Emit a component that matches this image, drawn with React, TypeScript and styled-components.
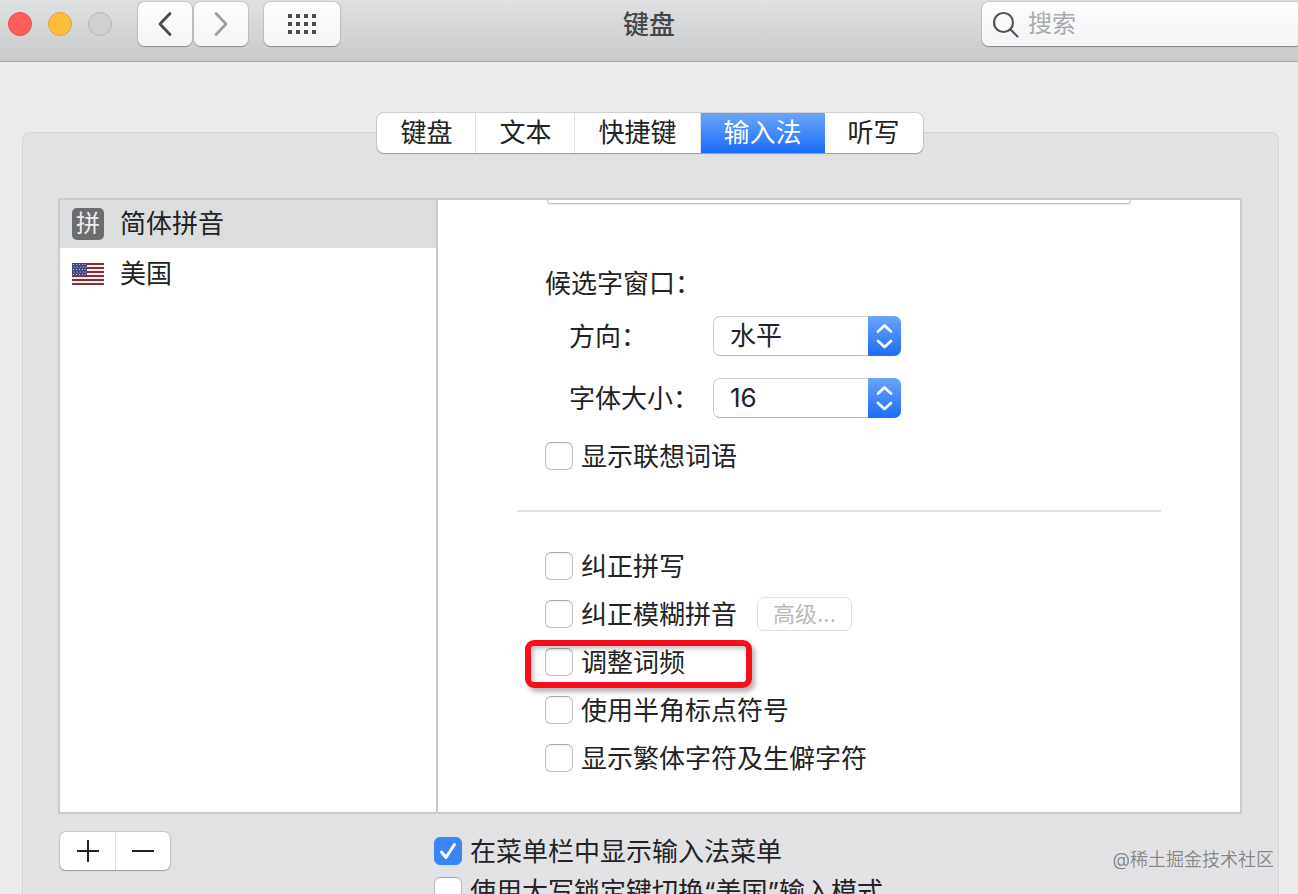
import React from "react";
import styled, { createGlobalStyle, css } from "styled-components";

const GlobalStyle = createGlobalStyle`
  *, *::before, *::after { box-sizing: border-box; }
  body { margin: 0; }
  body, button, input, select {
    font-family: Inter, "Noto Sans CJK SC", sans-serif;
    font-size: 26px;
    line-height: 40px;
    color: #222324;
  }
  button { padding: 0; border: 0; background: none; }
`;

const Window = styled.div`
  position: relative;
  display: flex;
  flex-direction: column;
  height: 100vh;
  overflow: hidden;
  background: #ebecee;
`;

const Toolbar = styled.header`
  display: grid;
  grid-template-columns: 1fr auto 1fr;
  align-items: start;
  flex: none;
  height: 62px;
  padding-top: 2px;
  background: linear-gradient(#dfe0e1, #c9cacc);
  border-bottom: 1px solid #a6a6a8;
`;

const ToolbarGroup = styled.div`
  display: flex;
  align-items: center;
  height: 44px;
  padding-left: 8px;
`;

const Lights = styled.div`
  display: flex;
  gap: 16px;
  margin-right: 26px;
`;

const Light = styled.button<{ $fill: string; $edge: string }>`
  width: 24px;
  height: 24px;
  border-radius: 50%;
  border: 1px solid ${(p) => p.$edge};
  background: ${(p) => p.$fill};
`;

const ToolButton = styled.button<{ $wide?: boolean }>`
  display: grid;
  place-items: center;
  width: ${(p) => (p.$wide ? 76 : 54)}px;
  height: 44px;
  margin-right: ${(p) => (p.$wide ? 0 : 2)}px;
  margin-left: ${(p) => (p.$wide ? 14 : 0)}px;
  border-radius: 7px;
  background: linear-gradient(#fdfdfe, #f4f5f7);
  box-shadow: 0 0 1px 1px rgba(0, 0, 0, 0.1), 0 1px 1px rgba(0, 0, 0, 0.25);
`;

const Title = styled.h1`
  margin: 0;
  font-size: 26px;
  line-height: 46px;
  font-weight: 500;
  color: #454648;
`;

const Search = styled.label`
  display: flex;
  align-items: center;
  justify-self: end;
  width: 320px;
  height: 44px;
  margin-right: -4px;
  padding-left: 10px;
  gap: 9px;
  border-radius: 7px;
  background: linear-gradient(#fdfdfe, #f3f4f6);
  box-shadow: 0 0 1px 1px rgba(0, 0, 0, 0.1), 0 1px 1px rgba(0, 0, 0, 0.3);
`;

const SearchInput = styled.input`
  flex: 1;
  min-width: 0;
  height: 40px;
  padding: 0;
  border: 0;
  outline: 0;
  background: none;
  font-size: 24px;
  &::placeholder { color: #a9aaac; opacity: 1; }
`;

const Panel = styled.main`
  display: flex;
  flex-direction: column;
  flex: 1;
  margin: 70px 19px 0 22px;
  padding: 0 36px 0 35px;
  background: #e2e2e4;
  border: 1px solid #d5d5d7;
  border-bottom: 0;
  border-radius: 8px 8px 0 0;
`;

const Tabs = styled.nav`
  display: flex;
  align-self: center;
  flex: none;
  height: 40px;
  margin: -20px 0 45px;
  border-radius: 7px;
  background: #fff;
  box-shadow: 0 0 1px 1px rgba(0, 0, 0, 0.13), 0 1px 1px rgba(0, 0, 0, 0.22);
`;

const Tab = styled.button<{ $active: boolean }>`
  padding: 0 23px;
  border-right: 1px solid #dedede;
  &:last-child { border-right: 0; }
  ${(p) =>
    p.$active &&
    css`
      color: #fff;
      border-right: 0;
      background: linear-gradient(#6aa5f8, #1a6dfb);
    `}
`;

const Split = styled.section`
  display: grid;
  grid-template-columns: 378px 1fr;
  flex: none;
  min-height: 616px;
  border: 2px solid #cbcbcc;
  background: #fff;
`;

const SourceList = styled.ul`
  display: flex;
  flex-direction: column;
  gap: 2px;
  margin: 0;
  padding: 0;
  list-style: none;
  border-right: 2px solid #cbcbcc;
`;

const Source = styled.li<{ $selected?: boolean }>`
  display: flex;
  align-items: center;
  gap: 16px;
  height: 48px;
  padding-left: 12px;
  background: ${(p) => (p.$selected ? "#dcddde" : "transparent")};
`;

const PinyinBadge = styled.span`
  width: 32px;
  height: 32px;
  border-radius: 5px;
  background: #6c6d6e;
  color: #ececec;
  font-size: 24px;
  line-height: 32px;
  text-align: center;
`;

const Options = styled.div`
  display: flex;
  flex-direction: column;
  padding: 0 79px;
`;

const ClippedField = styled.div`
  flex: none;
  height: 4px;
  margin: 0 30px 60px;
  border: 1px solid #c4c6c8;
  border-top: 0;
  border-radius: 0 0 6px 6px;
  box-shadow: 0 1px 2px rgba(0, 0, 0, 0.12);
`;

const Group = styled.div`
  display: flex;
  flex-direction: column;
  padding-left: 28px;
`;

const GroupTitle = styled.div`
  margin-bottom: 11px;
`;

const Fields = styled.div`
  display: flex;
  flex-direction: column;
  gap: 22px;
  margin: 0 0 19px 24px;
`;

const Field = styled.div`
  display: grid;
  grid-template-columns: 144px 188px;
  align-items: center;
  height: 40px;
`;

const FieldLabel = styled.label`
  padding-top: 2px;
`;

const SelectBox = styled.div`
  position: relative;
  height: 40px;
`;

const Select = styled.select`
  appearance: none;
  width: 100%;
  height: 40px;
  padding: 0 40px 0 16px;
  border: 1px solid #cfcfd0;
  border-bottom-color: #b9b9ba;
  border-radius: 7px;
  background: #fff;
  line-height: 38px;
`;

const Stepper = styled.span`
  position: absolute;
  inset: 0 0 0 auto;
  display: grid;
  place-items: center;
  width: 33px;
  border-radius: 0 7px 7px 0;
  background: linear-gradient(#6aa5f8, #1a6dfb);
  pointer-events: none;
`;

const CheckRow = styled.div<{ $compact?: boolean }>`
  position: relative;
  display: flex;
  align-items: center;
  gap: 20px;
  height: ${(p) => (p.$compact ? 40 : 48)}px;
`;

const CheckLabel = styled.label`
  display: flex;
  align-items: center;
  gap: 8px;
  height: 40px;
  white-space: nowrap;
`;

const CheckText = styled.span`
  padding-top: 2px;
`;

const CheckBox = styled.span`
  position: relative;
  display: grid;
  width: 28px;
  height: 28px;
`;

const CheckInput = styled.input`
  appearance: none;
  width: 28px;
  height: 28px;
  margin: 0;
  border: 1px solid #bdbebf;
  border-top-color: #a9aaab;
  border-radius: 6px;
  background: #fff;
  box-shadow: inset 0 1px 2px rgba(0, 0, 0, 0.08);
  &:checked {
    border-color: #3b86f7;
    background: #3b86f7;
    box-shadow: none;
  }
  & + svg { display: none; }
  &:checked + svg {
    display: block;
    position: absolute;
    inset: 0;
    pointer-events: none;
  }
`;

const Highlight = styled.span`
  position: absolute;
  top: 2px;
  left: -20px;
  width: 227px;
  height: 48px;
  border: 6px solid #f90d1b;
  border-radius: 9px;
  box-shadow: 3px 4px 5px rgba(0, 0, 0, 0.3), inset 3px 3px 4px rgba(0, 0, 0, 0.22);
  pointer-events: none;
`;

const AdvancedButton = styled.button`
  height: 34px;
  padding: 0 15px;
  border: 1px solid #dfdfe0;
  border-radius: 7px;
  color: #b9babb;
  font-size: 22px;
  line-height: 32px;
`;

const Rule = styled.hr`
  flex: none;
  width: 100%;
  height: 2px;
  margin: 34px 0 30px;
  border: 0;
  background: #e2e3e4;
`;

const Footer = styled.footer`
  display: grid;
  grid-template-columns: 376px 1fr;
  align-items: start;
  padding-top: 17px;
`;

const Segmented = styled.div`
  display: flex;
  justify-self: start;
  margin: 1px 0 0 2px;
  border-radius: 6px;
  background: #fff;
  box-shadow: 0 0 1px 1px rgba(0, 0, 0, 0.12), 0 1px 1px rgba(0, 0, 0, 0.22);
`;

const SegmentButton = styled.button`
  display: grid;
  place-items: center;
  width: 55px;
  height: 38px;
  & + & { border-left: 1px solid #dcdcdd; }
`;

const Watermark = styled.div`
  position: absolute;
  right: 24px;
  bottom: 20px;
  font-size: 18px;
  line-height: 28px;
  color: #868789;
  text-shadow: 0 0 1px #fff;
`;

const Chevron = ({ flip, color }: { flip?: boolean; color: string }) => (
  <svg width="16" height="26" viewBox="0 0 16 26" fill="none" aria-hidden="true">
    <path
      d={flip ? "M3 2.5 13 13 3 23.5" : "M13 2.5 3 13l10 10.5"}
      stroke={color}
      strokeWidth="2.8"
      strokeLinecap="round"
      strokeLinejoin="round"
    />
  </svg>
);

const GridIcon = () => (
  <svg width="28" height="20" viewBox="0 0 28 20" fill="#4b4c4e" aria-hidden="true">
    {[0, 8, 16].map((y) =>
      [0, 8, 16, 24].map((x) => <rect key={`${x}-${y}`} x={x} y={y} width="4" height="4" />)
    )}
  </svg>
);

const Flag = () => (
  <svg width="32" height="22" viewBox="0 0 32 22" aria-hidden="true">
    <rect width="32" height="22" fill="#f6eeee" />
    {[0, 4, 8, 12, 16, 20].map((y) => (
      <rect key={y} y={y} width="32" height="2" fill="#7d3238" />
    ))}
    <rect width="15" height="13" fill="#43457e" />
    {[2, 4.5, 7, 9.5, 12].map((y, row) =>
      [1.5, 4.5, 7.5, 10.5, 13].map((x) => (
        <circle key={`${x}-${y}`} cx={x + (row % 2 ? 0.8 : 0)} cy={y - 0.5} r="0.6" fill="#d9d9ea" />
      ))
    )}
  </svg>
);

function Check({ id, label, checked }: { id: string; label: string; checked?: boolean }) {
  return (
    <CheckLabel htmlFor={id}>
      <CheckBox>
        <CheckInput id={id} type="checkbox" defaultChecked={checked} />
        <svg width="28" height="28" viewBox="0 0 28 28" fill="none" aria-hidden="true">
          <path
            d="M7.5 15 12 20.5 20.5 7.5"
            stroke="#fff"
            strokeWidth="3"
            strokeLinecap="round"
            strokeLinejoin="round"
          />
        </svg>
      </CheckBox>
      <CheckText>{label}</CheckText>
    </CheckLabel>
  );
}

function Popup({ id, label, value }: { id: string; label: string; value: string }) {
  return (
    <Field>
      <FieldLabel htmlFor={id}>{label}</FieldLabel>
      <SelectBox>
        <Select id={id} defaultValue={value}>
          <option>{value}</option>
        </Select>
        <Stepper>
          <svg width="17" height="26" viewBox="0 0 17 26" fill="none" aria-hidden="true">
            <path
              d="M2 8.500 8.500 2.500 15 8.500M2 18 8.500 24 15 18"
              stroke="#fff"
              strokeWidth="2.600"
              strokeLinecap="round"
              strokeLinejoin="round"
            />
          </svg>
        </Stepper>
      </SelectBox>
    </Field>
  );
}

const tabs = ["键盘", "文本", "快捷键", "输入法", "听写"];

export default function App() {
  return (
    <>
      <GlobalStyle />
      <Window lang="zh-CN">
        <Toolbar>
          <ToolbarGroup>
            <Lights>
              <Light aria-label="关闭" $fill="#fc5f5b" $edge="#e2504d" />
              <Light aria-label="最小化" $fill="#fdbe3d" $edge="#dfa236" />
              <Light aria-label="缩放" $fill="#cfd0d1" $edge="#b3b4b5" />
            </Lights>
            <ToolButton aria-label="后退">
              <Chevron color="#4b4c4e" />
            </ToolButton>
            <ToolButton aria-label="前进">
              <Chevron flip color="#9d9ea0" />
            </ToolButton>
            <ToolButton $wide aria-label="显示全部">
              <GridIcon />
            </ToolButton>
          </ToolbarGroup>
          <Title>键盘</Title>
          <Search>
            <svg width="27" height="27" viewBox="0 0 27 27" fill="none" stroke="#55565a" strokeWidth="2.200" strokeLinecap="round" aria-hidden="true">
              <circle cx="11.500" cy="11.500" r="9.500" />
              <path d="M18.500 18.500 25.500 25.500" />
            </svg>
            <SearchInput type="text" placeholder="搜索" aria-label="搜索" />
          </Search>
        </Toolbar>

        <Panel>
          <Tabs>
            {tabs.map((name) => (
              <Tab key={name} $active={name === "输入法"}>
                {name}
              </Tab>
            ))}
          </Tabs>

          <Split>
            <SourceList>
              <Source $selected>
                <PinyinBadge>拼</PinyinBadge>
                简体拼音
              </Source>
              <Source>
                <Flag />
                美国
              </Source>
            </SourceList>

            <Options>
              <ClippedField />
              <Group>
                <GroupTitle>候选字窗口：</GroupTitle>
                <Fields>
                  <Popup id="direction" label="方向：" value="水平" />
                  <Popup id="font-size" label="字体大小：" value="16" />
                </Fields>
                <CheckRow $compact>
                  <Check id="suggest" label="显示联想词语" />
                </CheckRow>
              </Group>
              <Rule />
              <Group>
                <CheckRow>
                  <Check id="spelling" label="纠正拼写" />
                </CheckRow>
                <CheckRow>
                  <Check id="fuzzy" label="纠正模糊拼音" />
                  <AdvancedButton disabled>高级...</AdvancedButton>
                </CheckRow>
                <CheckRow>
                  <Check id="frequency" label="调整词频" />
                  <Highlight />
                </CheckRow>
                <CheckRow>
                  <Check id="halfwidth" label="使用半角标点符号" />
                </CheckRow>
                <CheckRow>
                  <Check id="traditional" label="显示繁体字符及生僻字符" />
                </CheckRow>
              </Group>
            </Options>
          </Split>

          <Footer>
            <Segmented>
              <SegmentButton aria-label="添加">
                <svg width="22" height="22" viewBox="0 0 22 22" stroke="#222" strokeWidth="2" aria-hidden="true">
                  <path d="M0 11h22M11 0v22" />
                </svg>
              </SegmentButton>
              <SegmentButton aria-label="移除">
                <svg width="22" height="22" viewBox="0 0 22 22" stroke="#222" strokeWidth="2" aria-hidden="true">
                  <path d="M0 11h22" />
                </svg>
              </SegmentButton>
            </Segmented>
            <div>
              <CheckRow $compact>
                <Check id="menubar" label="在菜单栏中显示输入法菜单" checked />
              </CheckRow>
              <CheckRow $compact>
                <Check id="capslock" label="使用大写锁定键切换“美国”输入模式" />
              </CheckRow>
            </div>
          </Footer>
        </Panel>
        <Watermark>@稀土掘金技术社区</Watermark>
      </Window>
    </>
  );
}
